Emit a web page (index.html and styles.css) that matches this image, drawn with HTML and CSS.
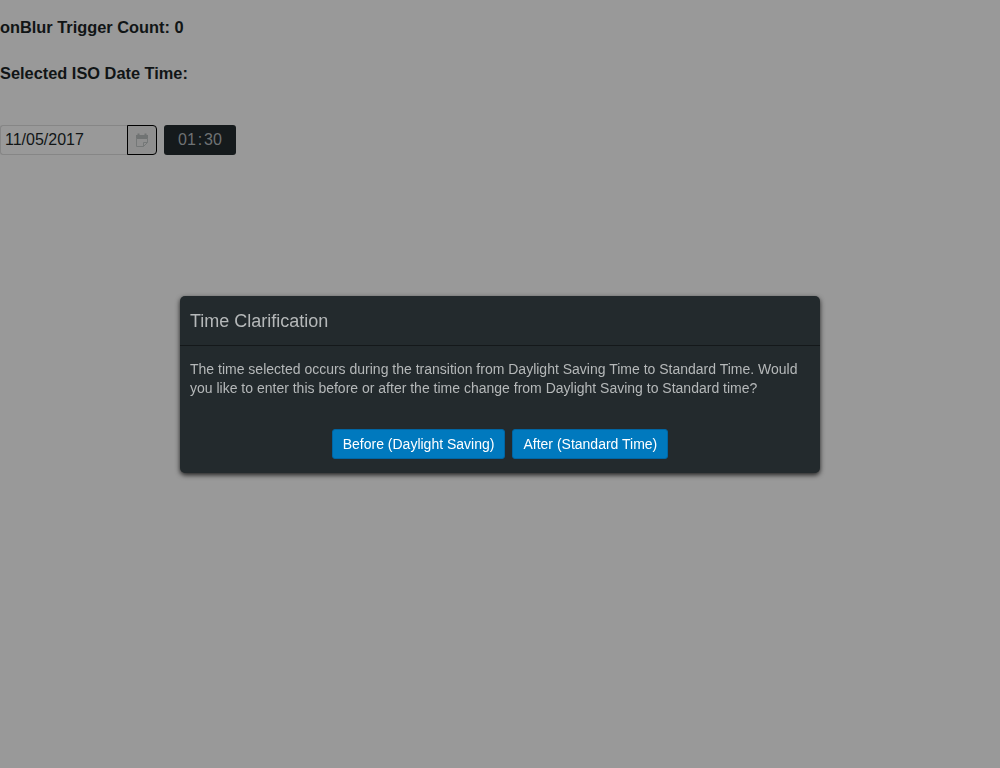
FILE: index.html
```html
<!DOCTYPE html>
<html lang="en">
<head>
<meta charset="utf-8">
<title>Date Time Picker</title>
<link rel="stylesheet" href="styles.css">
</head>
<body>
<main class="page">
  <h3 class="heading">onBlur Trigger Count: 0</h3>
  <h3 class="heading">Selected ISO Date Time:</h3>
  <div class="picker">
    <div class="date">
      <input class="date-input" type="text" aria-label="Date" value="11/05/2017">
      <button class="date-button" type="button" aria-label="Open calendar">
        <svg class="icon" viewBox="0 0 14 14" aria-hidden="true"><path d="M1 2h1.500V0.500h2V2h5V0.500h2V2H13v4H1z" fill="#707373"/><path d="M1.500 5v8.500h7l4-4V5M8.500 13.500v-4h4" fill="none" stroke="#757878"/></svg>
      </button>
    </div>
    <div class="time">
      <input class="time-input" type="text" aria-label="Hour" value="01"><span class="colon">:</span><input class="time-input" type="text" aria-label="Minute" value="30">
    </div>
  </div>
</main>
<div class="overlay">
  <section class="dialog" role="dialog" aria-modal="true" aria-labelledby="dialog-title">
    <h1 class="dialog-title" id="dialog-title">Time Clarification</h1>
    <p class="dialog-text">The time selected occurs during the transition from Daylight Saving Time to Standard Time. Would you like to enter this before or after the time change from Daylight Saving to Standard time?</p>
    <div class="dialog-actions">
      <button class="action" type="button">Before (Daylight Saving)</button>
      <button class="action" type="button">After (Standard Time)</button>
    </div>
  </section>
</div>
</body>
</html>
```
FILE: styles.css
```css
* { box-sizing: border-box; }
body {
  margin: 0;
  background: #999;
  color: #111516;
  font: 14px/20px "Liberation Sans", Arial, sans-serif;
}
.page { padding-top: 17px; }
.heading { margin: 0 0 26px; }
.picker { display: flex; gap: 7px; padding-top: 16px; font-size: 16px; }
.date { display: flex; }
.date-input {
  width: 128px;
  height: 30px;
  padding: 0 4px;
  border: 1px solid #868686;
  border-right: 0;
  border-radius: 3px 0 0 3px;
  background: #999;
  color: #111516;
  font: inherit;
}
.date-button {
  display: flex;
  align-items: center;
  justify-content: center;
  width: 30px;
  height: 30px;
  margin-left: -1px;
  padding: 0;
  border: 1px solid #000;
  border-radius: 0 4px 4px 0;
  background: #8f8f8f;
}
.icon { width: 14px; height: 14px; }
.time {
  display: flex;
  align-items: center;
  justify-content: center;
  width: 72px;
  height: 30px;
  border-radius: 3px;
  background: #151a1c;
  color: #6f7274;
}
.time-input {
  width: 20px;
  padding: 0;
  border: 0;
  background: none;
  color: inherit;
  font: inherit;
  text-align: center;
}
.colon { width: 6px; text-align: center; }
.overlay {
  position: fixed;
  inset: 0;
  display: flex;
  align-items: center;
  justify-content: center;
}
.dialog {
  width: 64%;
  border-radius: 5px;
  background: #232a2d;
  color: #b5b8b9;
  box-shadow: 0 2px 5px rgba(0, 0, 0, 0.8);
}
.dialog-title {
  margin: 0;
  padding: 13px 10px 12px;
  border-bottom: 1px solid #14181a;
  font-size: 18px;
  font-weight: 400;
  line-height: 24px;
}
.dialog-text { margin: 0; padding: 14px 10px 0; line-height: 19px; }
.dialog-actions {
  display: flex;
  flex-wrap: wrap;
  justify-content: center;
  gap: 7px;
  padding: 31px 10px 14px;
}
.action {
  height: 30px;
  padding: 0 10px;
  border: 1px solid #0065a3;
  border-radius: 3px;
  background: #0079be;
  color: #fff;
  font: inherit;
}
```
